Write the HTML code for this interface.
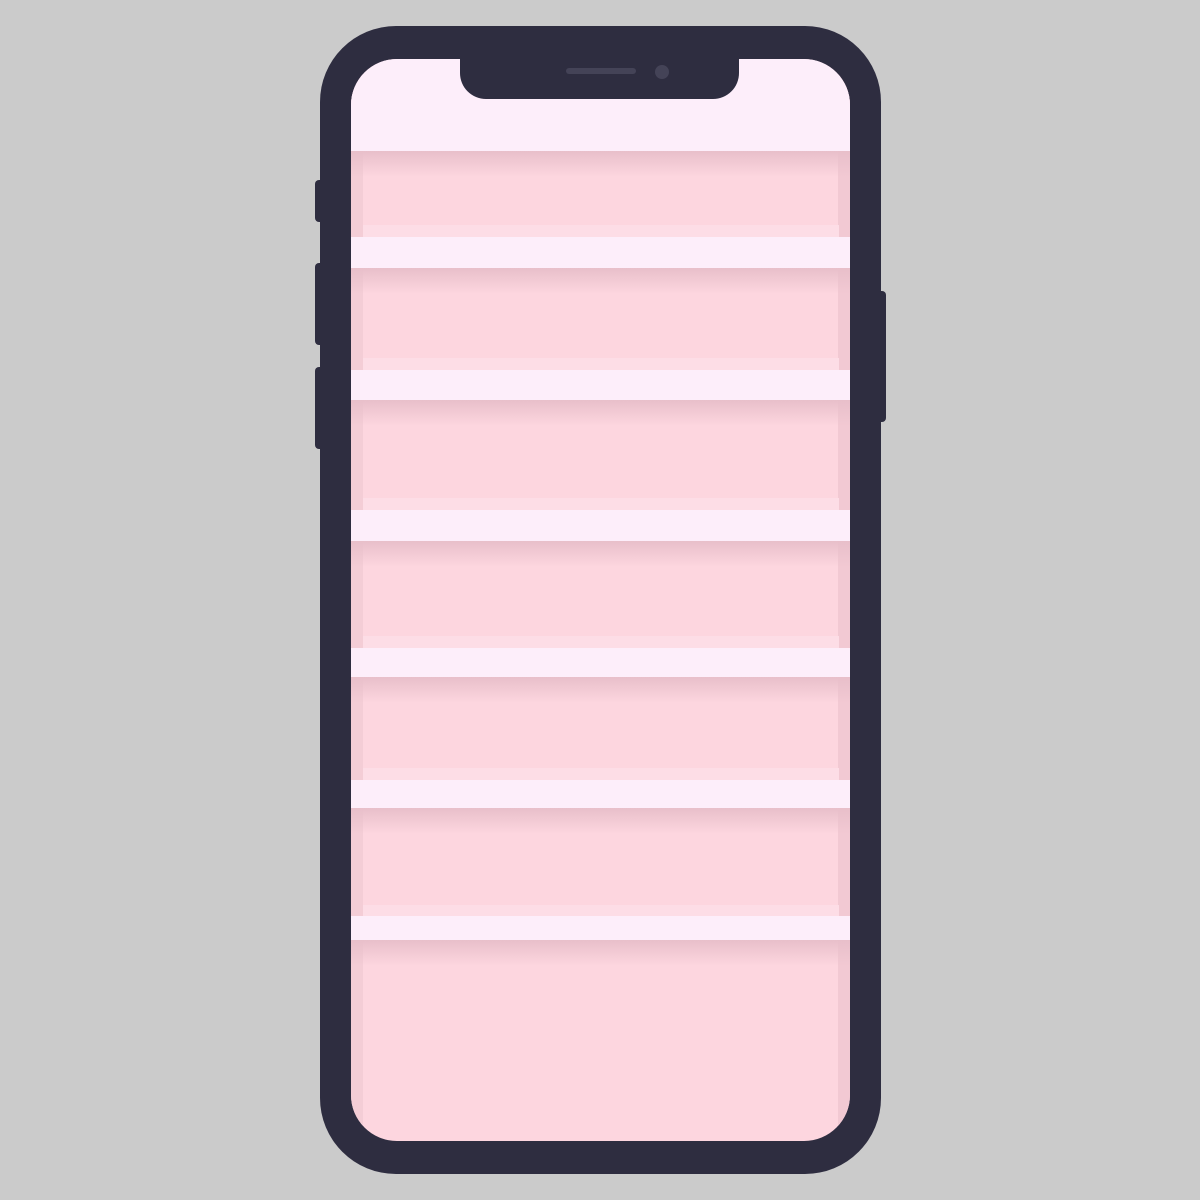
<!DOCTYPE html>
<html><head><style>
body{margin:0;width:1200px;height:1200px;background:#cbcbcb;position:relative;overflow:hidden}
div{position:absolute;box-sizing:border-box}
.btn{background:#2e2d40;border-radius:4px}
.bar{left:0;width:500px;background:#fdeefa}
.bev{left:12px;width:476px;background:#fddde6}
.sh{left:0;width:500px;height:26px;background:linear-gradient(#e8bfca,rgba(253,214,223,0))}
</style></head><body>
<div class="btn" style="left:315px;top:180px;width:12px;height:42px"></div>
<div class="btn" style="left:315px;top:263px;width:12px;height:82px"></div>
<div class="btn" style="left:315px;top:367px;width:12px;height:82px"></div>
<div class="btn" style="left:874px;top:291px;width:12px;height:131px"></div>
<div style="left:320px;top:26px;width:561px;height:1148px;background:#2e2d40;border-radius:76px"></div>
<div style="left:351px;top:59px;width:499px;height:1082px;border-radius:46px;overflow:hidden;background:#fdd6df">
  <div style="left:0;top:0;width:12px;height:1082px;background:#f4cdd6"></div>
  <div style="right:0;top:0;width:12px;height:1082px;background:#f2c9d3"></div>
  <div class="bar" style="top:0;height:92px"></div>
  <div class="sh" style="top:92px"></div>
  <div class="bev" style="top:166px;height:12px"></div>
  <div class="bar" style="top:178px;height:31px"></div>
  <div class="sh" style="top:209px"></div>
  <div class="bev" style="top:299px;height:12px"></div>
  <div class="bar" style="top:311px;height:30px"></div>
  <div class="sh" style="top:341px"></div>
  <div class="bev" style="top:439px;height:12px"></div>
  <div class="bar" style="top:451px;height:31px"></div>
  <div class="sh" style="top:482px"></div>
  <div class="bev" style="top:577px;height:12px"></div>
  <div class="bar" style="top:589px;height:29px"></div>
  <div class="sh" style="top:618px"></div>
  <div class="bev" style="top:709px;height:12px"></div>
  <div class="bar" style="top:721px;height:28px"></div>
  <div class="sh" style="top:749px"></div>
  <div class="bev" style="top:846px;height:11px"></div>
  <div class="bar" style="top:857px;height:24px"></div>
  <div class="sh" style="top:881px"></div>
</div>
<div style="left:460px;top:50px;width:279px;height:49px;background:#2e2d40;border-radius:0 0 26px 26px"></div>
<div style="left:566px;top:68px;width:70px;height:6px;background:#444357;border-radius:3px"></div>
<div style="left:655px;top:65px;width:14px;height:14px;background:#444357;border-radius:50%"></div>
</body></html>
